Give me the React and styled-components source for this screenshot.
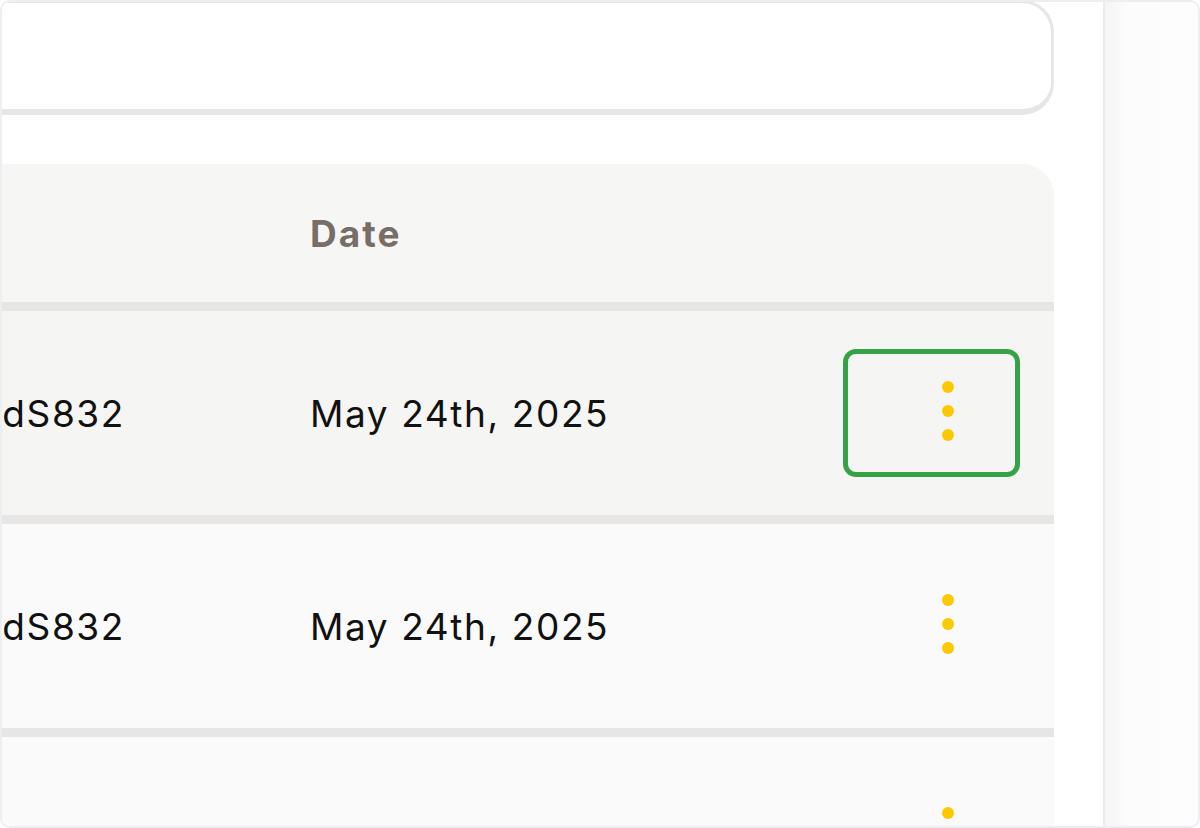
import styled, { createGlobalStyle } from "styled-components";

const GlobalStyle = createGlobalStyle`
  html, body {
    margin: 0;
    padding: 0;
    background: #ffffff;
  }
  body {
    font-family: Inter, "Noto Sans", "Liberation Sans", sans-serif;
  }
`;

const rows = [
  { id: "ORD-4KdS832", date: "May 24th, 2025", focused: true },
  { id: "ORD-4KdS832", date: "May 24th, 2025" },
  { id: "ORD-4KdS832", date: "May 24th, 2025" },
];

const DotsIcon = () => (
  <svg width="14" height="62" viewBox="0 0 14 62" aria-hidden="true">
    <circle cx="7" cy="7" r="6" fill="#fcc800" />
    <circle cx="7" cy="31" r="6" fill="#fcc800" />
    <circle cx="7" cy="55" r="6" fill="#fcc800" />
  </svg>
);

const App = () => {
  return (
    <>
      <GlobalStyle />
      <Frame>
        <Main>
          <Content>
            <SearchBox />
            <Table>
              <HeadRow>
                <IdCell />
                <HeadCell>Date</HeadCell>
                <ActionCell />
              </HeadRow>
              {rows.map((row, i) => (
                <Row key={`row-${i}`} $active={row.focused}>
                  <IdCell>{row.id}</IdCell>
                  <DateCell>{row.date}</DateCell>
                  <ActionCell>
                    <MenuButton $focused={row.focused}>
                      <DotsIcon />
                    </MenuButton>
                  </ActionCell>
                </Row>
              ))}
            </Table>
          </Content>
        </Main>
        <Sidebar />
      </Frame>
    </>
  );
};

const Frame = styled.div`
  box-sizing: border-box;
  width: 1200px;
  height: 828px;
  display: flex;
  border: 2px solid #eeeef2;
  border-radius: 10px;
  overflow: hidden;
  background: #ffffff;
`;
const Main = styled.main`
  flex: 1;
  overflow: hidden;
  background: #ffffff;
`;
const Content = styled.div`
  margin-left: -200px;
  margin-right: 49px;
  display: flex;
  flex-direction: column;
  gap: 49px;
`;
const SearchBox = styled.div`
  box-sizing: border-box;
  height: 115px;
  margin-top: -2px;
  background: #ffffff;
  border: 3px solid #e7e6e4;
  border-bottom-width: 6px;
  border-radius: 32px;
`;
const Table = styled.div`
  display: flex;
  flex-direction: column;
  background: #fafafa;
  border-top-right-radius: 32px;
  border-top-left-radius: 32px;
  overflow: hidden;
`;
const HeadRow = styled.div`
  display: grid;
  grid-template-columns: 508px 1fr 177px;
  padding-right: 34px;
  height: 138px;
  align-items: center;
  background: #f6f6f4;
  border-bottom: 9px solid #e7e6e4;
`;
const Row = styled.div`
  display: grid;
  grid-template-columns: 508px 1fr 177px;
  padding-right: 34px;
  height: 204px;
  align-items: center;
  background: ${(props) => (props.$active ? "#f5f5f3" : "#fafafa")};
  border-bottom: 9px solid #e7e6e4;
`;
const IdCell = styled.div`
  text-align: right;
  padding-right: 185px;
  font-size: 37px;
  letter-spacing: 1.6px;
  color: #111111;
  white-space: nowrap;
`;
const HeadCell = styled.div`
  font-size: 37px;
  font-weight: 700;
  letter-spacing: 2px;
  color: #776e68;
`;
const DateCell = styled.div`
  font-size: 37px;
  letter-spacing: 1.6px;
  color: #111111;
  white-space: nowrap;
`;
const ActionCell = styled.div`
  display: flex;
`;
const MenuButton = styled.button`
  box-sizing: border-box;
  width: 177px;
  height: 128px;
  display: flex;
  align-items: center;
  justify-content: center;
  padding: 0 0 4px 32px;
  background: transparent;
  border: 5px solid ${(props) => (props.$focused ? "#35a345" : "transparent")};
  border-radius: 13px;
  cursor: pointer;
`;
const Sidebar = styled.aside`
  width: 93px;
  flex-shrink: 0;
  border-left: 2px solid #ebebee;
  background: linear-gradient(90deg, #f5f5f6 0%, #fcfcfc 25%, #fdfdfd 100%);
`;

export default App;
